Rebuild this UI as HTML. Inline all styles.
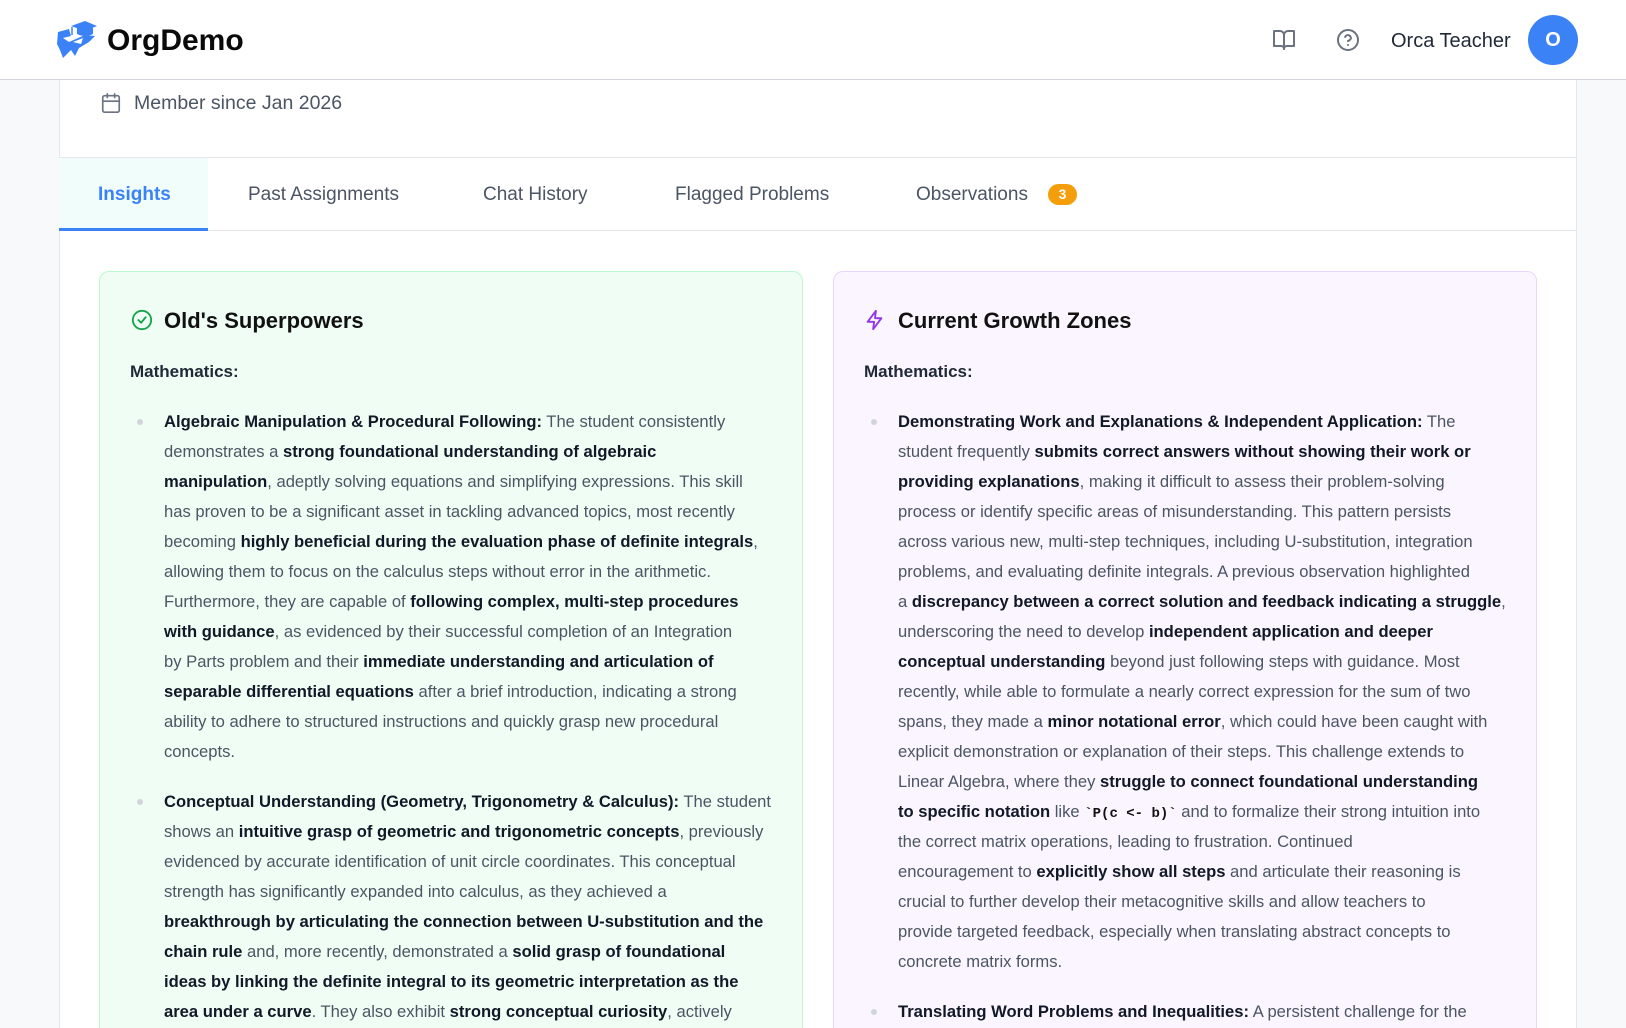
<!DOCTYPE html>
<html><head><meta charset="utf-8"><style>
*{margin:0;padding:0;box-sizing:border-box}
html,body{width:1626px;height:1028px;overflow:hidden}
body{font-family:"Liberation Sans",sans-serif;background:#f8f9fb;position:relative;color:#111827}
.hdr{position:absolute;left:0;top:0;width:1626px;height:80px;background:#fff;border-bottom:1px solid #d1d5db}
.abs{position:absolute;white-space:nowrap}
.panel{position:absolute;left:59px;top:80px;width:1518px;height:948px;background:#fff;border-right:1px solid #e5e7eb;border-left:1px solid #e5e7eb}
.tabs{position:absolute;left:59px;top:157px;width:1518px;height:74px;border-top:1px solid #e5e7eb;border-bottom:1px solid #e5e7eb}
.tab{position:absolute;top:0;height:72px;line-height:74px;font-size:19px;color:#4b5563}
.card{position:absolute;top:271px;width:704px;height:800px;border-radius:10px}
.g{left:99px;background:#f0fdf4;border:1px solid #bbf7d0}
.p{left:833px;background:#faf5ff;border:1px solid #e9d5ff}
.title{position:absolute;top:307px;font-size:22px;font-weight:bold;color:#111;line-height:28px}
.math{position:absolute;top:362px;font-size:17px;font-weight:bold;color:#1f2937;line-height:20px}
.txt{position:absolute;font-size:16.6px;color:#4b5563}
.txt div{height:30px;line-height:30px;white-space:nowrap}
.txt b{color:#111827}
.dot{position:absolute;width:6px;height:6px;border-radius:3px;background:#d1d5db}
code{font-family:"Liberation Mono",monospace;font-size:14px;color:#111;font-weight:bold}
</style></head><body>
<div class="hdr">
 <svg class="abs" style="left:55px;top:20px" width="44" height="40" viewBox="0 0 44 40">
  <path d="M16 6 L30 1 L42 6 L30 11 Z" fill="#3b82f6"/><path d="M22 8 v6 q8 4 16 0 v-6" fill="#3b82f6"/><line x1="17" y1="7" x2="17" y2="15" stroke="#3b82f6" stroke-width="1.5"/>
  <path d="M3 12 L14 9 L16 16 L8 18 L14 22 L30 15 L40 16 L34 22 L24 28 L20 36 L16 30 L8 38 L5 30 L2 24 Z" fill="#3b82f6"/>
  <path d="M18 22 L28 18 L26 24 Z" fill="#fff"/>
 </svg>
 <div class="abs" style="left:107px;top:21px;font-size:30px;font-weight:bold;color:#0a0a0a;line-height:40px">OrgDemo</div>
 <svg class="abs" style="left:1272px;top:29px" width="24" height="22" viewBox="0 0 24 22" fill="none" stroke="#6b7280" stroke-width="2" stroke-linejoin="round"><path d="M2 2 h6 a4 4 0 0 1 4 4 v14 a3 3 0 0 0-3-3 H2 Z"/><path d="M22 2 h-6 a4 4 0 0 0-4 4 v14 a3 3 0 0 1 3-3 h7 Z"/></svg>
 <svg class="abs" style="left:1336px;top:28px" width="24" height="24" viewBox="0 0 24 24" fill="none" stroke="#6b7280" stroke-width="2" stroke-linecap="round"><circle cx="12" cy="12" r="10"/><path d="M9.1 9a3 3 0 0 1 5.8 1c0 2-3 3-3 3"/><path d="M12 17h.01"/></svg>
 <div class="abs" style="left:1391px;top:29px;font-size:20px;color:#1f2937;line-height:24px">Orca Teacher</div>
 <div class="abs" style="left:1528px;top:15px;width:50px;height:50px;border-radius:25px;background:#3b82f6;color:#fff;font-size:20px;font-weight:bold;text-align:center;line-height:50px">O</div>
</div>
<div class="panel"></div>
<svg class="abs" style="left:100px;top:92px" width="22" height="22" viewBox="0 0 24 24" fill="none" stroke="#6b7280" stroke-width="1.8" stroke-linecap="round"><rect x="3" y="4" width="18" height="18" rx="2"/><path d="M16 2v4M8 2v4M3 10h18"/></svg>
<div class="abs" style="left:134px;top:91px;font-size:19.5px;color:#4b5563;line-height:24px">Member since Jan 2026</div>
<div class="tabs">
 <div class="tab" style="left:0;width:149px;background:#f0fdfa;border-bottom:3px solid #3b82f6;height:73px"></div>
 <div class="tab" style="left:39px;color:#3b82f6;font-weight:bold">Insights</div>
 <div class="tab" style="left:189px">Past Assignments</div>
 <div class="tab" style="left:424px">Chat History</div>
 <div class="tab" style="left:616px">Flagged Problems</div>
 <div class="tab" style="left:857px">Observations</div>
 <div class="abs" style="left:989px;top:26px;width:29px;height:21px;border-radius:11px;background:#f59e0b;color:#fff;font-size:14px;font-weight:bold;text-align:center;line-height:21px">3</div>
</div>

<div class="card g"></div>
<div class="card p"></div>
<svg class="abs" style="left:131px;top:309px" width="22" height="22" viewBox="0 0 24 24" fill="none" stroke="#16a34a" stroke-width="2" stroke-linecap="round" stroke-linejoin="round"><circle cx="12" cy="12" r="10"/><path d="M8 12l3 3 5-6"/></svg>
<div class="title" style="left:164px">Old's Superpowers</div>
<svg class="abs" style="left:864px;top:308px" width="22" height="24" viewBox="0 0 24 24" fill="none" stroke="#9333ea" stroke-width="2" stroke-linejoin="round"><path d="M13 2 L4 14 h7 l-1 8 9-12 h-7 z"/></svg>
<div class="title" style="left:898px">Current Growth Zones</div>
<div class="math" style="left:130px">Mathematics:</div>
<div class="math" style="left:864px">Mathematics:</div>

<div class="dot" style="left:137px;top:419px"></div>
<div class="dot" style="left:137px;top:799px"></div>
<div class="txt" style="left:164px;top:407px">
<div><b>Algebraic Manipulation &amp; Procedural Following:</b> The student consistently</div>
<div>demonstrates a <b>strong foundational understanding of algebraic</b></div>
<div><b>manipulation</b>, adeptly solving equations and simplifying expressions. This skill</div>
<div>has proven to be a significant asset in tackling advanced topics, most recently</div>
<div>becoming <b>highly beneficial during the evaluation phase of definite integrals</b>,</div>
<div>allowing them to focus on the calculus steps without error in the arithmetic.</div>
<div>Furthermore, they are capable of <b>following complex, multi-step procedures</b></div>
<div><b>with guidance</b>, as evidenced by their successful completion of an Integration</div>
<div>by Parts problem and their <b>immediate understanding and articulation of</b></div>
<div><b>separable differential equations</b> after a brief introduction, indicating a strong</div>
<div>ability to adhere to structured instructions and quickly grasp new procedural</div>
<div>concepts.</div>
<div style="height:20px"></div>
<div><b>Conceptual Understanding (Geometry, Trigonometry &amp; Calculus):</b> The student</div>
<div>shows an <b>intuitive grasp of geometric and trigonometric concepts</b>, previously</div>
<div>evidenced by accurate identification of unit circle coordinates. This conceptual</div>
<div>strength has significantly expanded into calculus, as they achieved a</div>
<div><b>breakthrough by articulating the connection between U-substitution and the</b></div>
<div><b>chain rule</b> and, more recently, demonstrated a <b>solid grasp of foundational</b></div>
<div><b>ideas by linking the definite integral to its geometric interpretation as the</b></div>
<div><b>area under a curve</b>. They also exhibit <b>strong conceptual curiosity</b>, actively</div>
</div>

<div class="dot" style="left:871px;top:419px"></div>
<div class="dot" style="left:871px;top:1009px"></div>
<div class="txt" style="left:898px;top:407px">
<div><b>Demonstrating Work and Explanations &amp; Independent Application:</b> The</div>
<div>student frequently <b>submits correct answers without showing their work or</b></div>
<div><b>providing explanations</b>, making it difficult to assess their problem-solving</div>
<div>process or identify specific areas of misunderstanding. This pattern persists</div>
<div>across various new, multi-step techniques, including U-substitution, integration</div>
<div>problems, and evaluating definite integrals. A previous observation highlighted</div>
<div>a <b>discrepancy between a correct solution and feedback indicating a struggle</b>,</div>
<div>underscoring the need to develop <b>independent application and deeper</b></div>
<div><b>conceptual understanding</b> beyond just following steps with guidance. Most</div>
<div>recently, while able to formulate a nearly correct expression for the sum of two</div>
<div>spans, they made a <b>minor notational error</b>, which could have been caught with</div>
<div>explicit demonstration or explanation of their steps. This challenge extends to</div>
<div>Linear Algebra, where they <b>struggle to connect foundational understanding</b></div>
<div><b>to specific notation</b> like <code>`P(c &lt;- b)`</code> and to formalize their strong intuition into</div>
<div>the correct matrix operations, leading to frustration. Continued</div>
<div>encouragement to <b>explicitly show all steps</b> and articulate their reasoning is</div>
<div>crucial to further develop their metacognitive skills and allow teachers to</div>
<div>provide targeted feedback, especially when translating abstract concepts to</div>
<div>concrete matrix forms.</div>
<div style="height:20px"></div>
<div><b>Translating Word Problems and Inequalities:</b> A persistent challenge for the</div>
</div>
</body></html>
